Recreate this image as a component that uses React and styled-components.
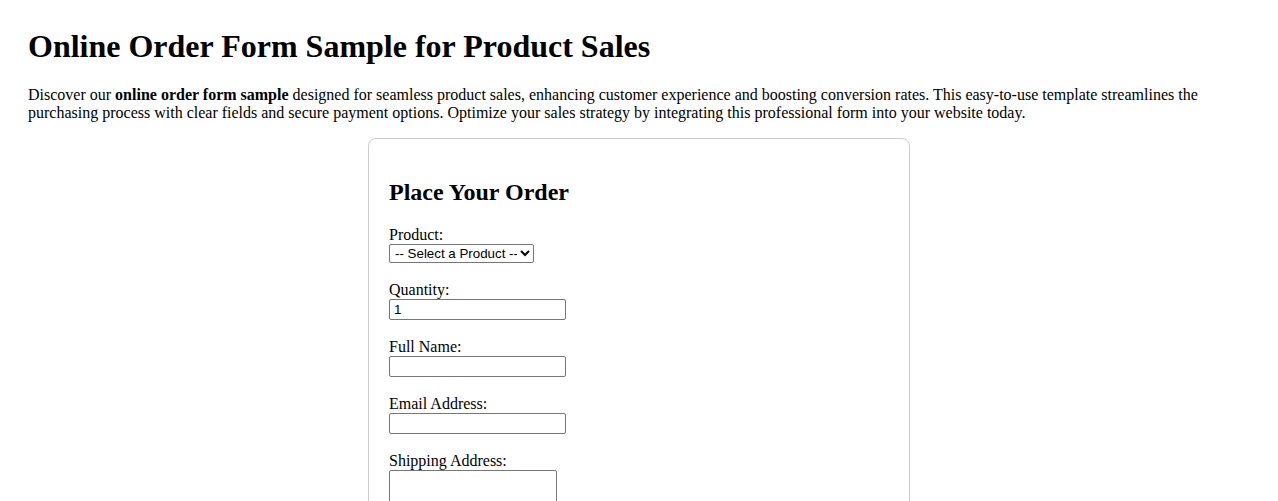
import React from "react";
import styled, { createGlobalStyle } from "styled-components";

const GlobalStyle = createGlobalStyle`
  html, body {
    margin: 0;
    padding: 0;
    background: #ffffff;
  }
  body {
    font-family: "Liberation Serif", "Times New Roman", serif;
    font-size: 16px;
    color: #000000;
  }
`;

const Page = styled.main`
  padding: 28px 28px 40px;
`;

const Title = styled.h1`
  font-size: 32px;
  font-weight: bold;
  margin: 0 0 21.44px;
  line-height: normal;
`;

const Intro = styled.p`
  margin: 0 0 16px;
  line-height: normal;
`;

const Card = styled.section`
  max-width: 500px;
  margin: 0 auto;
  padding: 20px;
  border: 1px solid #cccccc;
  border-radius: 8px;
`;

const CardTitle = styled.h2`
  font-size: 24px;
  font-weight: bold;
  margin: 19.92px 0;
  line-height: normal;
`;

const Group = styled.div`
  margin-bottom: 18.5px;
`;

const Label = styled.label`
  display: block;
  line-height: normal;
`;

const controlBase = `
  display: block;
  box-sizing: border-box;
  margin-top: -0.5px;
  font-family: "Liberation Sans", Arial, sans-serif;
  font-size: 13.333px;
  color: #000000;
  background: #ffffff;
  border: 1px solid #767676;
  border-radius: 2px;
`;

const Select = styled.select`
  ${controlBase}
  width: 145px;
  height: 19px;
  padding: 0 0 0 1px;
`;

const Input = styled.input`
  ${controlBase}
  width: 177px;
  height: 21px;
  padding: 1px 4px;
`;

const TextArea = styled.textarea`
  ${controlBase}
  width: 168px;
  height: 52px;
  padding: 2px;
  resize: both;
  font-family: "Liberation Mono", "Courier New", monospace;
`;

const SubmitButton = styled.button`
  font-family: "Liberation Sans", Arial, sans-serif;
  font-size: 13.333px;
  padding: 1px 6px;
`;

export default function App() {
  return (
    <>
      <GlobalStyle />
      <Page>
        <Title>Online Order Form Sample for Product Sales</Title>
        <Intro>
          Discover our <strong>online order form sample</strong> designed for
          seamless product sales, enhancing customer experience and boosting
          conversion rates. This easy-to-use template streamlines the
          purchasing process with clear fields and secure payment options.
          Optimize your sales strategy by integrating this professional form
          into your website today.
        </Intro>
        <Card>
          <CardTitle>Place Your Order</CardTitle>
          <form onSubmit={(e) => e.preventDefault()}>
            <Group>
              <Label htmlFor="product">Product:</Label>
              <Select id="product" defaultValue="">
                <option value="">-- Select a Product --</option>
                <option value="a">Product A</option>
                <option value="b">Product B</option>
                <option value="c">Product C</option>
              </Select>
            </Group>
            <Group>
              <Label htmlFor="quantity">Quantity:</Label>
              <Input id="quantity" type="number" defaultValue="1" min="1" />
            </Group>
            <Group>
              <Label htmlFor="name">Full Name:</Label>
              <Input id="name" type="text" />
            </Group>
            <Group>
              <Label htmlFor="email">Email Address:</Label>
              <Input id="email" type="email" />
            </Group>
            <Group>
              <Label htmlFor="address">Shipping Address:</Label>
              <TextArea id="address" rows="3" />
            </Group>
            <SubmitButton type="submit">Submit Order</SubmitButton>
          </form>
        </Card>
      </Page>
    </>
  );
}
